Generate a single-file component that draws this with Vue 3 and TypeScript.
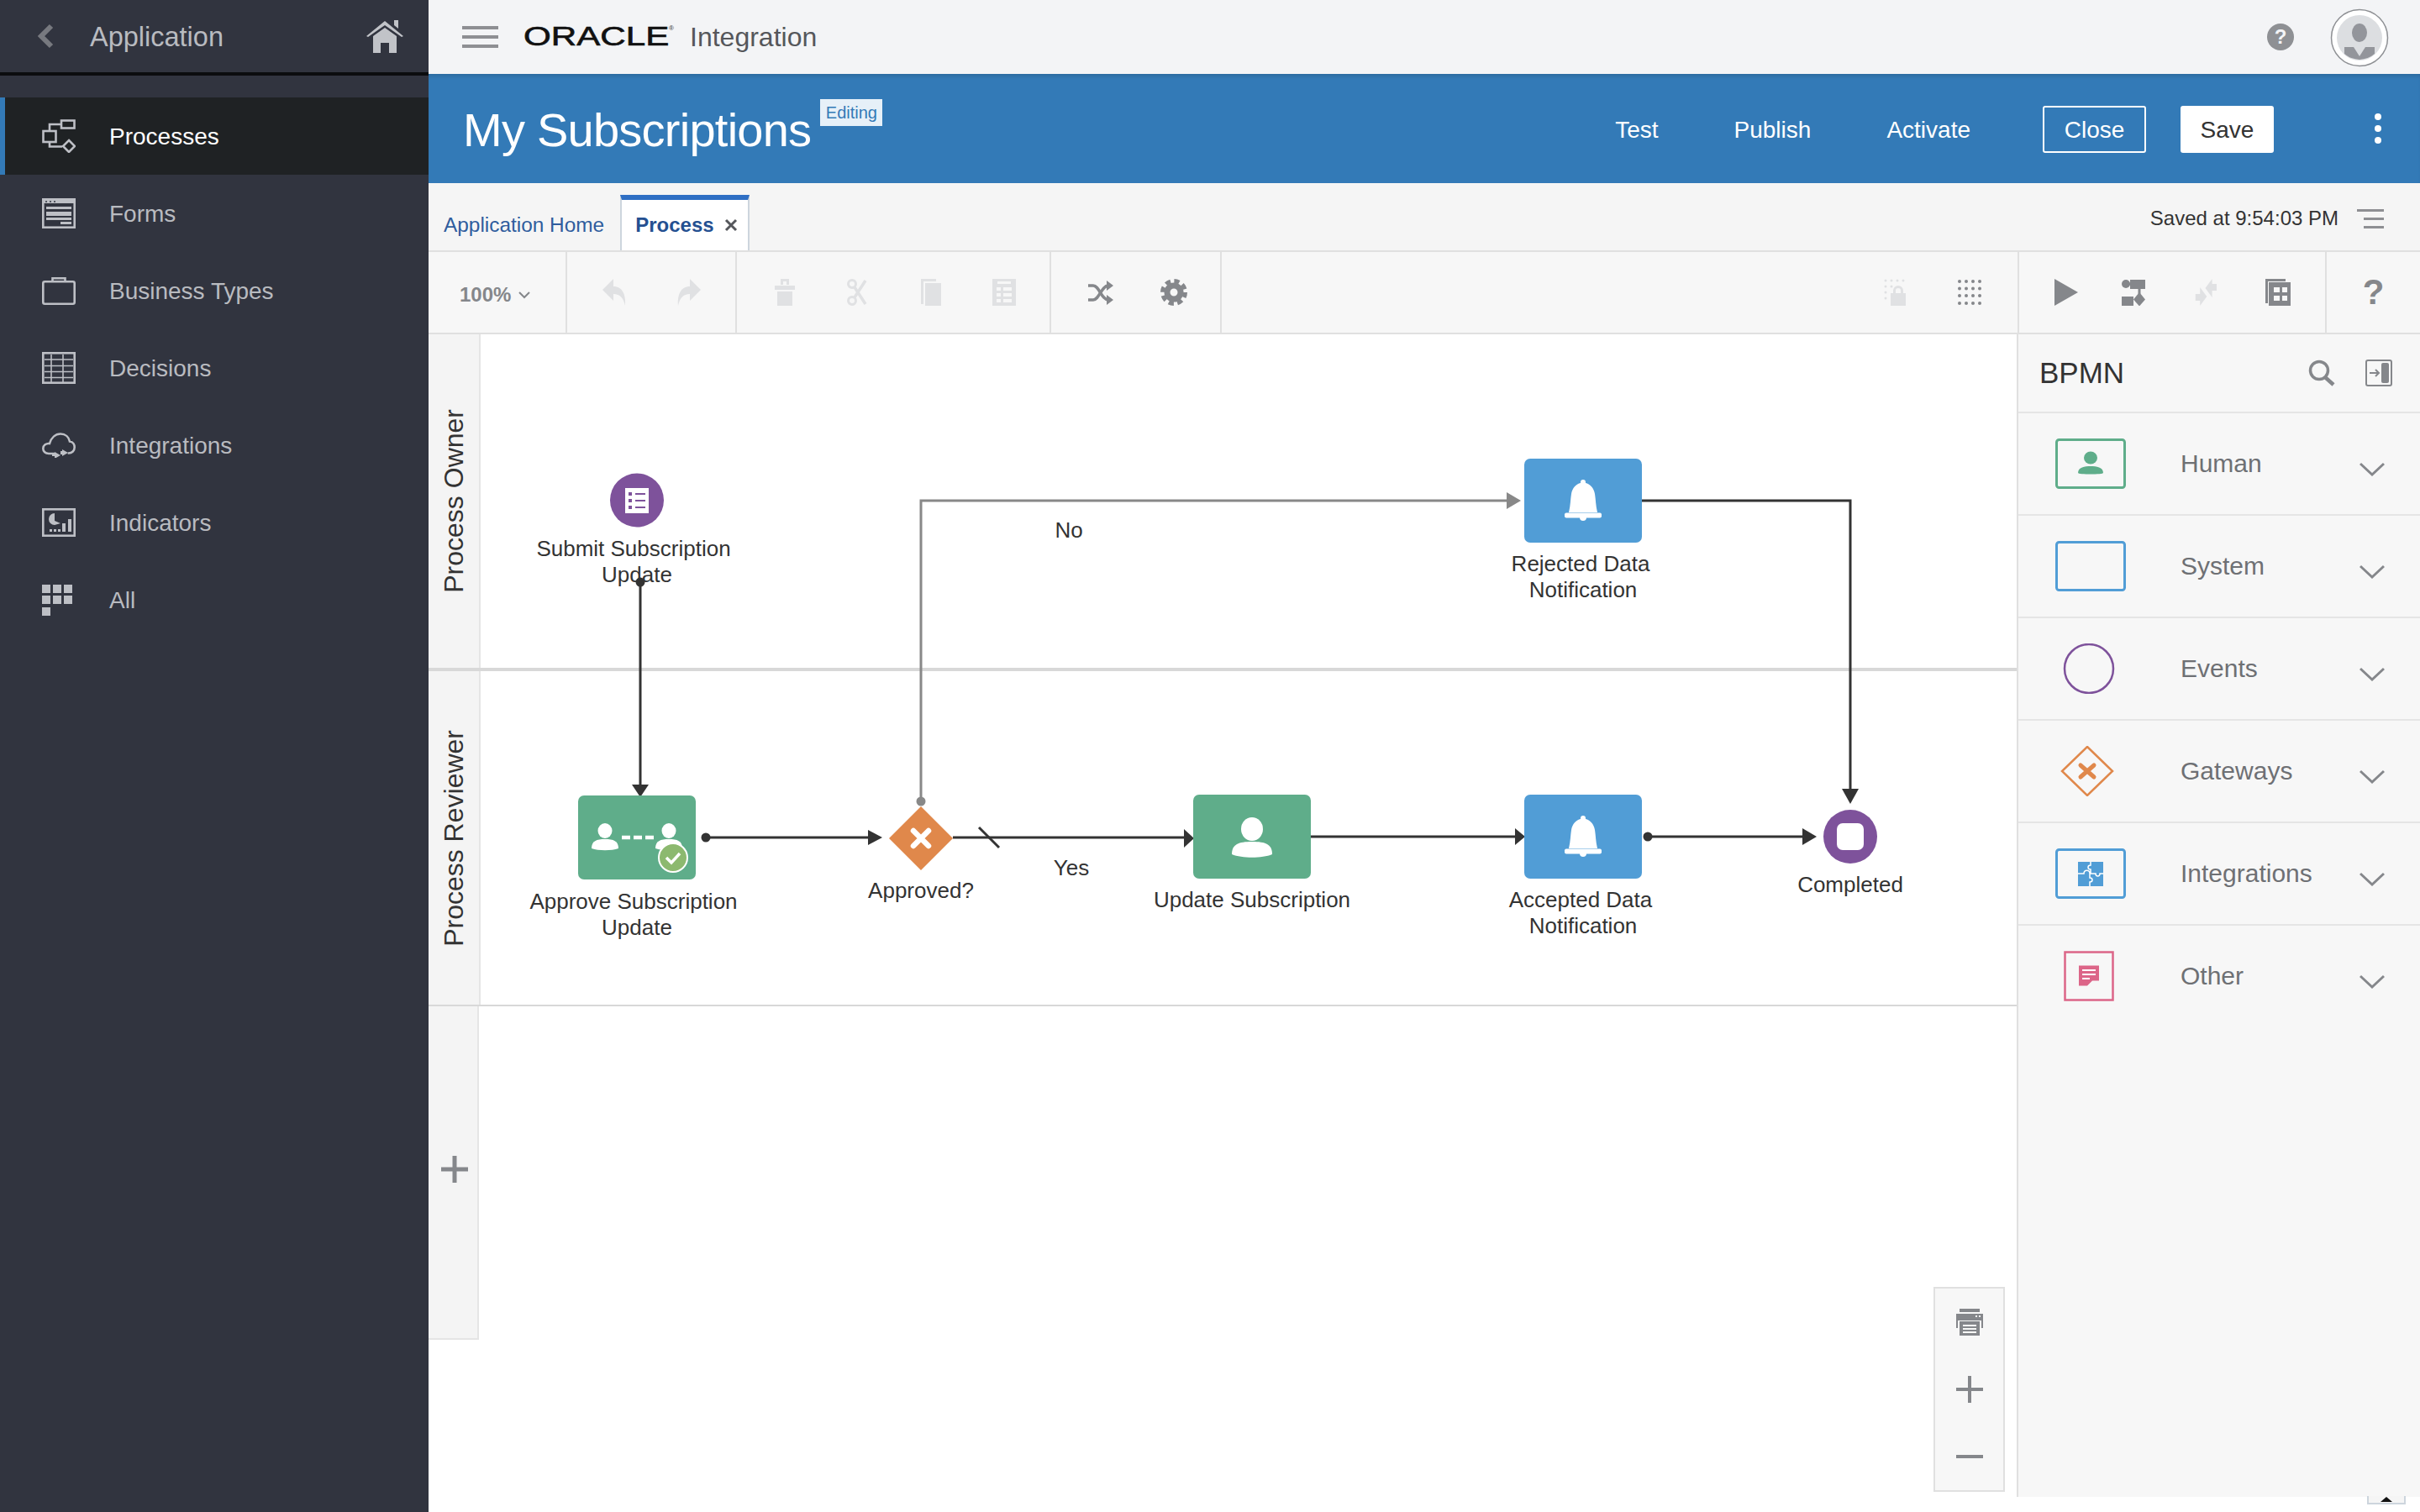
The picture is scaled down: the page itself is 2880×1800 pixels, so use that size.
<script setup lang="ts">
// icon bodies, all drawn with currentColor
const icons: Record<string, string> = {
  processes: '<g fill="none" stroke="currentColor" stroke-width="2.6"><rect x="23" y="1.5" width="15.5" height="9"/><rect x="1.5" y="14" width="15" height="13"/><path d="M9 14V6h14M9 27v5.500h15"/><path d="M32 25l7 7-7 7-7-7z"/></g>',
  forms: '<g fill="none" stroke="currentColor" stroke-width="2.6"><rect x="1.300" y="1.300" width="37.400" height="33.400"/></g><g fill="currentColor"><rect x="2" y="2" width="36" height="4"/><rect x="5" y="10" width="30" height="3"/><rect x="5" y="16" width="30" height="5"/><rect x="5" y="23" width="30" height="3"/><rect x="22" y="28" width="13" height="3"/></g><g fill="#31343f"><circle cx="5" cy="4" r="1"/><circle cx="10" cy="4" r="1"/><circle cx="15" cy="4" r="1"/></g>',
  business: '<g fill="none" stroke="currentColor" stroke-width="2.6"><rect x="1.300" y="5.300" width="37.400" height="26.400" rx="2"/><path d="M12.500 5V1.300h15V5"/></g>',
  decisions: '<g fill="none" stroke="currentColor" stroke-width="2.6"><rect x="1.300" y="1.300" width="37.400" height="35.400"/></g><g fill="none" stroke="currentColor" stroke-width="1.600"><path d="M3 9h34M3 16.500h34M3 23.500h34M3 30.500h34M11 3v33M25 3v33"/></g>',
  integrations: '<g fill="none" stroke="currentColor" stroke-width="2.600"><path d="M15 25H8C4 25 1.300 22.500 1.300 19 1.300 15 5 12.500 9 13 11 6 16 1.500 22 1.500c6 0 10 4 11 9 4 .5 5.700 4 5.700 7 0 4-3 7-7 7h-1"/></g><g fill="currentColor"><path d="M22 28l-7-4v3h-3v2h3v3zM24 21l7 4-7 4v-2h-2v-4h2z" transform="translate(0 -1)"/></g>',
  indicators: '<g fill="none" stroke="currentColor" stroke-width="2.600"><rect x="1.300" y="1.300" width="37.400" height="31.400"/></g><g fill="currentColor"><path d="M15 6a7 7 0 1 0 0 14h0l7-2-7-3z"/><rect x="9" y="25" width="3" height="3"/><rect x="14" y="25" width="3" height="3"/><rect x="19" y="25" width="3" height="3"/><rect x="24" y="18" width="4" height="10"/><rect x="31" y="13" width="4" height="15"/></g>',
  all: '<g fill="currentColor"><rect x="0" y="0" width="10" height="10"/><rect x="13" y="0" width="10" height="10"/><rect x="26" y="0" width="10" height="10"/><rect x="0" y="13" width="10" height="10"/><rect x="13" y="13" width="10" height="10"/><rect x="26" y="13" width="10" height="10"/><rect x="0" y="27" width="10" height="10"/></g>',

  undo: '<path fill="currentColor" d="M1 13 14 0v9c11 0 15 10 14 23-2-9-6-14-14-14v8z"/>',
  redo: '<path fill="currentColor" d="M31 13 18 0v9C7 9 3 19 4 32c2-9 6-14 14-14v8z"/>',
  trash: '<path fill="currentColor" fill-rule="evenodd" d="M11 0h10v7h-3V3h-4v4h-3zM4 8h24v5H4zM7 15h18v17H7z"/>',
  scissors: '<g fill="none" stroke="currentColor" stroke-width="3"><circle cx="9" cy="6" r="4.500"/><circle cx="9" cy="26" r="4.500"/><path d="M12 10l13 20M12 22L25 2" stroke-width="3.500"/></g>',
  copy: '<path fill="currentColor" d="M4 0h18v3H7v27H4z"/><path fill="currentColor" d="M9 5h19v27H9z"/>',
  form: '<path fill="currentColor" fill-rule="evenodd" d="M2 0h28v32H2zM8 3v3h16V3zM7 10v4h5v-4zM15 10v4h10v-4zM7 17v4h5v-4zM15 17v4h10v-4zM7 24v4h5v-4zM15 24v4h10v-4z"/>',
  shuffle: '<g fill="none" stroke="currentColor" stroke-width="3.500"><path d="M1 8h6c7 0 10 17 18 17"/><path d="M1 25h6c7 0 10-17 18-17"/></g><path fill="currentColor" d="M23 2l8 6-8 6zM23 19l8 6-8 6z"/>',
  gear: '<g fill="none" stroke="currentColor"><circle cx="16" cy="16" r="13.500" stroke-width="5" stroke-dasharray="6.200 4.400"/><circle cx="16" cy="16" r="8" stroke-width="7"/></g>',
  lock: '<g fill="currentColor"><circle cx="3" cy="2" r="1.500"/><circle cx="10" cy="2" r="1.500"/><circle cx="17" cy="2" r="1.500"/><circle cx="24" cy="2" r="1.500"/><circle cx="3" cy="9" r="1.500"/><circle cx="3" cy="16" r="1.500"/><circle cx="3" cy="23" r="1.500"/><circle cx="10" cy="9" r="1.500"/><path fill-rule="evenodd" d="M9 17h3v-3a6 6 0 0 1 12 0v3h3v15H9zM15 17h6v-3a3 3 0 0 0-6 0z"/></g>',
  grid: '<g fill="currentColor"><circle cx="4" cy="3" r="2"/><circle cx="12" cy="3" r="2"/><circle cx="20" cy="3" r="2"/><circle cx="28" cy="3" r="2"/><circle cx="4" cy="11.500" r="2"/><circle cx="12" cy="11.500" r="2"/><circle cx="20" cy="11.500" r="2"/><circle cx="28" cy="11.500" r="2"/><circle cx="4" cy="20" r="2"/><circle cx="12" cy="20" r="2"/><circle cx="20" cy="20" r="2"/><circle cx="28" cy="20" r="2"/><circle cx="4" cy="29" r="2"/><circle cx="12" cy="29" r="2"/><circle cx="20" cy="29" r="2"/><circle cx="28" cy="29" r="2"/></g>',
  play: '<path fill="currentColor" d="M2 0l28 16L2 32z"/>',
  flow: '<g fill="currentColor"><rect x="12" y="1" width="18" height="11"/><circle cx="7" cy="6" r="5"/><rect x="2" y="21" width="14" height="11"/><path d="M23 16l7 8.500-7 8-7-8z"/></g><g fill="none" stroke="currentColor" stroke-width="3"><path d="M7 6h8M23 10v8"/></g>',
  merge: '<path fill="currentColor" d="M30 6h-6V0l-9 11 9 11v-8h6zM2 26h6v6l9-11-9-11v8H2z" transform="translate(2 0) scale(.9 1)"/>',
  table: '<path fill="currentColor" d="M1 0h24v3H4v26H1z"/><path fill="currentColor" fill-rule="evenodd" d="M5 4h26v28H5zM11 10h7v6h-7zM21 10h6v6h-6zM11 20h7v6h-7zM21 20h6v6h-6z"/>',

  human: '<rect x="1.500" y="1.500" width="81" height="57" rx="3" fill="none" stroke="#5fad8a" stroke-width="3"/><g fill="#5fad8a"><ellipse cx="42" cy="23" rx="8" ry="7.500"/><path d="M27 41c0-7 8-8 15-8s15 1 15 8c0 2-30 2-30 0z"/></g>',
  system: '<rect x="1.500" y="1.500" width="81" height="57" rx="3" fill="none" stroke="#519dd6" stroke-width="3"/>',
  events: '<circle cx="40" cy="30" r="29" fill="none" stroke="#7e529b" stroke-width="2.500"/>',
  gateways: '<path d="M38 1l30 29-30 29L8 30z" fill="none" stroke="#e0884b" stroke-width="2.500"/><path d="M30 23l16 14M46 23L30 37" stroke="#e0884b" stroke-width="5" stroke-linecap="round"/>',
  puzzle: '<rect x="1.500" y="1.500" width="81" height="57" rx="3" fill="none" stroke="#519dd6" stroke-width="3"/><rect x="27" y="16" width="30" height="29" fill="#519dd6"/><path d="M27 30h7c0-5 7-5 7 0h7c0 4 5 4 5 0h4M42 16v4c-4 0-4 5 0 5v5M41 30v5c4 0 4 5 0 5v5" fill="none" stroke="#fff" stroke-width="1.500"/>',
  note: '<rect x="1.500" y="1.500" width="57" height="57" fill="none" stroke="#dc6588" stroke-width="2.500"/><path d="M18 18h24v18h-8l-6 6H18z" transform="translate(0 -.5)" fill="#dc6588"/><path d="M22 23h16M22 28h16M22 33h9" stroke="#fff" stroke-width="2"/>',
}

const navItems = [
  { label: 'Processes', icon: 'processes', w: 40, h: 40, active: true },
  { label: 'Forms', icon: 'forms', w: 40, h: 36 },
  { label: 'Business Types', icon: 'business', w: 40, h: 33 },
  { label: 'Decisions', icon: 'decisions', w: 40, h: 38 },
  { label: 'Integrations', icon: 'integrations', w: 40, h: 30 },
  { label: 'Indicators', icon: 'indicators', w: 40, h: 34 },
  { label: 'All', icon: 'all', w: 36, h: 37 },
]

const toolGroups = [
  { cls: 'g-undo', items: [{ icon: 'undo', off: true }, { icon: 'redo', off: true }] },
  { cls: 'g-edit', items: [{ icon: 'trash', off: true }, { icon: 'scissors', off: true }, { icon: 'copy', off: true }, { icon: 'form', off: true }] },
  { cls: 'g-flow', items: [{ icon: 'shuffle', off: false }, { icon: 'gear', off: false }] },
]

const palette = [
  { label: 'Human', icon: 'human', w: 84 },
  { label: 'System', icon: 'system', w: 84 },
  { label: 'Events', icon: 'events', w: 84 },
  { label: 'Gateways', icon: 'gateways', w: 84 },
  { label: 'Integrations', icon: 'puzzle', w: 84 },
  { label: 'Other', icon: 'note', w: 60 },
]

// diagram, in page coordinates (the svg viewBox starts at the canvas origin)
const dark = '#333'
const grey = '#888'
const edges = [
  { d: 'M762 693V936', color: dark },
  { d: 'M840 997H1034', color: dark },
  { d: 'M1096 954V596H1794', color: grey },
  { d: 'M1134 997H1410', color: dark },
  { d: 'M1560 996H1804', color: dark },
  { d: 'M1954 596H2202V941', color: dark },
  { d: 'M1961 996H2146', color: dark },
]
const heads = [
  { p: '752,934 772,934 762,949', color: dark },
  { p: '1033,988 1050,997 1033,1006', color: dark },
  { p: '1793,586 1810,596 1793,606', color: grey },
  { p: '1409,987 1421,998 1409,1009', color: dark },
  { p: '1803,986 1815,996 1803,1006', color: dark },
  { p: '2192,939 2212,939 2202,957', color: dark },
  { p: '2145,986 2162,996 2145,1006', color: dark },
]
const dots = [
  { x: 762, y: 693, color: dark },
  { x: 840, y: 997, color: dark },
  { x: 1096, y: 954, color: grey },
  { x: 1961, y: 996, color: dark },
]
const labels = [
  { x: 754, y: 653, text: 'Submit Subscription' },
  { x: 758, y: 684, text: 'Update' },
  { x: 754, y: 1073, text: 'Approve Subscription' },
  { x: 758, y: 1104, text: 'Update' },
  { x: 1096, y: 1060, text: 'Approved?' },
  { x: 1272, y: 631, text: 'No' },
  { x: 1275, y: 1033, text: 'Yes' },
  { x: 1490, y: 1071, text: 'Update Subscription' },
  { x: 1881, y: 671, text: 'Rejected Data' },
  { x: 1884, y: 702, text: 'Notification' },
  { x: 1881, y: 1071, text: 'Accepted Data' },
  { x: 1884, y: 1102, text: 'Notification' },
  { x: 2202, y: 1053, text: 'Completed' },
]
const bellTasks = [{ x: 1814, y: 546 }, { x: 1814, y: 946 }]
const laneNames = ['Process Owner', 'Process Reviewer']
</script>

<template>
  <div class="page">
    <aside class="sidebar">
      <div class="side-head">
        <svg class="back" width="20" height="30" viewBox="0 0 20 30"><path d="M17 3 5 15l12 12" fill="none" stroke="currentColor" stroke-width="6"/></svg>
        <span class="side-title">Application</span>
        <svg class="home" width="44" height="40" viewBox="0 0 44 40">
          <path d="M0 20 22 2l22 18-2 1L22 7 2 21z" fill="currentColor" />
          <path d="M33 1h5v10l-5-4z" fill="currentColor" />
          <path fill-rule="evenodd" d="M8 20 22 10l14 10v20H27V28h-10v12H8z" fill="currentColor" />
        </svg>
      </div>
      <nav class="side-nav">
        <a v-for="item in navItems" :key="item.label" class="nav-item" :class="{ active: item.active }">
          <span class="nav-icon">
            <svg :width="item.w" :height="item.h" :viewBox="`0 0 ${item.w} ${item.h}`" v-html="icons[item.icon]"></svg>
          </span>
          <span class="nav-label">{{ item.label }}</span>
        </a>
      </nav>
    </aside>

    <main class="main">
      <header class="topbar">
        <span class="burger"><i></i><i></i><i></i></span>
        <span class="logo"><span class="logo-word">ORACLE</span><sup class="logo-reg">®</sup></span>
        <span class="product">Integration</span>
        <span class="grow"></span>
        <span class="help-dot">?</span>
        <svg class="avatar" width="70" height="70" viewBox="0 0 70 70">
          <circle cx="35" cy="35" r="33.500" fill="#fff" stroke="#8e9094" stroke-width="1.500" />
          <circle cx="35" cy="35" r="27" fill="#dcdee1" />
          <ellipse cx="35" cy="29" rx="9" ry="11" fill="#93959b" />
          <path d="M17 46h36v8a27 27 0 0 1-36 0z" fill="#93959b" />
          <path d="M28 46h14l-7 11z" fill="#dcdee1" />
        </svg>
      </header>

      <section class="banner">
        <h1 class="app-name">My Subscriptions</h1>
        <span class="badge">Editing</span>
        <span class="grow"></span>
        <a class="bar-link">Test</a>
        <a class="bar-link l-publish">Publish</a>
        <a class="bar-link l-activate">Activate</a>
        <button class="btn btn-close">Close</button>
        <button class="btn btn-save">Save</button>
        <span class="kebab"><i></i><i></i><i></i></span>
      </section>

      <div class="tabs">
        <a class="tab-link">Application Home</a>
        <div class="tab-active">
          <span>Process</span>
          <svg width="16" height="16" viewBox="0 0 16 16"><path d="M2 2l12 12M14 2 2 14" stroke="#55575b" stroke-width="3" /></svg>
        </div>
        <span class="grow"></span>
        <span class="saved">Saved at 9:54:03 PM</span>
        <span class="saved-menu"><i></i><i></i><i></i></span>
      </div>

      <div class="toolbar">
        <div class="zoom-pick">
          <span>100%</span>
          <svg width="14" height="10" viewBox="0 0 14 10"><path d="M1 2l6 6 6-6" fill="none" stroke="currentColor" stroke-width="2" /></svg>
        </div>
        <div v-for="group in toolGroups" :key="group.cls" class="tool-group" :class="group.cls">
          <span v-for="t in group.items" :key="t.icon" class="tool" :class="{ off: t.off }">
            <svg width="32" height="32" viewBox="0 0 32 32" v-html="icons[t.icon]"></svg>
          </span>
        </div>
        <span class="grow"></span>
        <span class="tool off"><svg width="32" height="32" viewBox="0 0 32 32" v-html="icons.lock"></svg></span>
        <span class="tool t-grid"><svg width="32" height="32" viewBox="0 0 32 32" v-html="icons.grid"></svg></span>
        <div class="run-group">
          <span class="tool t-play"><svg width="32" height="32" viewBox="0 0 32 32" v-html="icons.play"></svg></span>
          <span class="tool"><svg width="32" height="32" viewBox="0 0 32 32" v-html="icons.flow"></svg></span>
          <span class="tool off"><svg width="32" height="32" viewBox="0 0 32 32" v-html="icons.merge"></svg></span>
          <span class="tool"><svg width="32" height="32" viewBox="0 0 32 32" v-html="icons.table"></svg></span>
        </div>
        <div class="query-group">?</div>
      </div>

      <div class="work">
        <div class="canvas">
          <div v-for="name in laneNames" :key="name" class="lane">
            <div class="lane-head"><span class="lane-name">{{ name }}</span></div>
          </div>
          <div class="lane-add">
            <svg width="34" height="34" viewBox="0 0 34 34"><path d="M17 1v32M1 17h32" stroke="#85878b" stroke-width="5" /></svg>
          </div>

          <svg class="diagram" viewBox="510 398 1892 1402" width="1892" height="1402">
            <path v-for="e in edges" :key="e.d" :d="e.d" fill="none" :stroke="e.color" stroke-width="3" />
            <polygon v-for="h in heads" :key="h.p" :points="h.p" :fill="h.color" />
            <circle v-for="d in dots" :key="d.x" :cx="d.x" :cy="d.y" r="5.500" :fill="d.color" />
            <path d="M1165 985l24 24" stroke="#333" stroke-width="3" />

            <!-- start event -->
            <circle cx="758" cy="595.500" r="32" fill="#7e529b" />
            <rect x="744" y="581" width="28" height="30" fill="#fff" />
            <path d="M748 586h4v4h-4zM748 594h4v4h-4zM748 602h4v4h-4z" fill="#7e529b" />
            <path d="M756 588h12M756 596h12M756 604h12" stroke="#7e529b" stroke-width="2" />

            <!-- approve task -->
            <rect x="688" y="947" width="140" height="100" rx="7" fill="#5fad8a" />
            <g fill="#fff">
              <ellipse cx="720" cy="989" rx="8.500" ry="9" />
              <path d="M704 1010c0-9 6-11 16-11s16 2 16 11c-8 3-24 3-32 0z" />
              <ellipse cx="796" cy="989" rx="8.500" ry="9" />
              <path d="M780 1010c0-9 6-11 16-11s16 2 16 11c-8 3-24 3-32 0z" />
            </g>
            <path d="M740 997h38" stroke="#fff" stroke-width="4.500" stroke-dasharray="10 4" />
            <circle cx="801" cy="1021" r="17" fill="#8cb96f" stroke="#fff" stroke-width="2" />
            <path d="M793 1021l6 6 10-11" fill="none" stroke="#fff" stroke-width="3.500" />

            <!-- gateway -->
            <path d="M1096 960l38 38-38 38-38-38z" fill="#e0884b" />
            <path d="M1087 989l18 18M1105 989l-18 18" stroke="#fff" stroke-width="6.500" stroke-linecap="round" />

            <!-- update task -->
            <rect x="1420" y="946" width="140" height="100" rx="7" fill="#5fad8a" />
            <ellipse cx="1490" cy="987" rx="13" ry="14" fill="#fff" />
            <path d="M1466 1017c0-12 8-15 24-15s24 3 24 15c-12 5-36 5-48 0z" fill="#fff" />

            <!-- notification tasks -->
            <g v-for="t in bellTasks" :key="t.y" :transform="`translate(${t.x} ${t.y})`">
              <rect width="140" height="100" rx="7" fill="#519dd6" />
              <g transform="translate(70 50)" fill="#fff">
                <path d="M-17 14C-15 6-15-2-14-8-13-15-8-20-3-21V-22A3 3 0 0 1 3-22V-21C8-20 13-15 14-8 15-2 15 6 17 14Z" />
                <rect x="-22" y="14.500" width="44" height="6" rx="2" />
                <circle cy="20" r="4" />
              </g>
            </g>

            <!-- end event -->
            <circle cx="2202" cy="996" r="32" fill="#7e529b" />
            <rect x="2186" y="980" width="32" height="32" rx="7" fill="#fff" />

            <text v-for="l in labels" :key="l.text + l.y" class="node-label" :x="l.x" :y="l.y" text-anchor="middle" dominant-baseline="central">{{ l.text }}</text>
          </svg>

          <div class="zoom-box">
            <svg width="32" height="32" viewBox="0 0 32 32">
              <path fill="#85878b" d="M4 0h24v4H4zM0 6h32v17h-2v-9H2v9H0zM4 15h24v17H4z" />
              <path d="M8 20h16M8 24h16M8 28h16" stroke="#f7f7f7" stroke-width="2" />
              <path d="M23 9h2M27 9h2" stroke="#f7f7f7" stroke-width="2" />
            </svg>
            <svg width="32" height="32" viewBox="0 0 32 32"><path d="M16 0v32M0 16h32" stroke="#85878b" stroke-width="4" /></svg>
            <svg width="32" height="32" viewBox="0 0 32 32"><path d="M0 16h32" stroke="#85878b" stroke-width="4" /></svg>
          </div>
        </div>

        <aside class="panel">
          <div class="panel-head">
            <span class="panel-title">BPMN</span>
            <span class="grow"></span>
            <svg class="p-search" width="32" height="32" viewBox="0 0 32 32">
              <circle cx="13" cy="13" r="10.500" fill="none" stroke="#85878b" stroke-width="3.500" />
              <path d="M20 21l10 9" stroke="#85878b" stroke-width="4.500" />
            </svg>
            <svg width="32" height="32" viewBox="0 0 32 32">
              <rect x="1" y="1" width="30" height="30" rx="2" fill="none" stroke="#85878b" stroke-width="2" />
              <rect x="19" y="4" width="9" height="24" rx="2" fill="#85878b" />
              <path d="M5 16h11M12 12l4 4-4 4" fill="none" stroke="#85878b" stroke-width="2" />
            </svg>
          </div>
          <div v-for="row in palette" :key="row.label" class="p-row">
            <span class="p-icon">
              <svg :width="row.w" height="60" :viewBox="`0 0 ${row.w} 60`" v-html="icons[row.icon]"></svg>
            </span>
            <span class="p-label">{{ row.label }}</span>
            <span class="grow"></span>
            <svg class="p-chev" width="30" height="18" viewBox="0 0 30 18"><path d="M1 2l14 13L29 2" fill="none" stroke="#85878b" stroke-width="3" /></svg>
          </div>
        </aside>
      </div>
      <div class="scroll-tab"><svg width="14" height="6" viewBox="0 0 14 6"><path d="M7 0l7 6H0z" fill="#111" /></svg></div>
    </main>
  </div>
</template>

<style scoped>
.page {
  display: flex;
  width: 2880px;
  height: 1800px;
  overflow: hidden;
  background: #fff;
  font-family: "Liberation Sans", Arial, sans-serif;
  color: #333;
}
.grow { flex: 1; }

/* left navigation */
.sidebar {
  width: 510px;
  flex: none;
  background: #31343f;
  color: #b9bbc0;
}
.side-head {
  display: flex;
  align-items: center;
  height: 86px;
  padding: 0 30px 0 44px;
  border-bottom: 4px solid #0b0c0e;
  box-sizing: content-box;
}
.back { color: #77797f; margin-right: 43px; }
.side-title { font-size: 32.500px; padding-top: 3px; }
.home { margin-left: auto; color: #c1c3c8; }
.side-nav { padding-top: 26px; }
.nav-item {
  display: flex;
  align-items: center;
  height: 92px;
  padding-left: 50px;
  font-size: 28px;
}
.nav-icon {
  width: 80px;
  display: flex;
  color: #bdbfc5;
}
.nav-label { padding-top: 1px; }
.nav-item.active {
  background: #1f2224;
  color: #fff;
  box-shadow: inset 6px 0 0 #337ab7;
}

/* top bars */
.main { flex: 1; display: flex; flex-direction: column; position: relative; min-width: 0; }
.topbar {
  display: flex;
  align-items: center;
  height: 88px;
  flex: none;
  padding: 0 37px 0 40px;
  background: #f3f4f6;
}
.burger { display: flex; flex-direction: column; gap: 7px; width: 43px; }
.burger i { height: 4px; background: #8e8f93; }
.logo { width: 180px; margin-left: 30px; display: flex; height: 30px; align-items: center; position: relative; }
.logo-word {
  font-size: 31px;
  font-weight: 400;
  color: #111;
  -webkit-text-stroke: 0.6px #111;
  transform: scaleX(1.36);
  transform-origin: left center;
}
.logo-reg { position: absolute; left: 173px; top: 0; font-size: 8px; color: #333; line-height: 10px; }
.product { font-size: 32px; color: #55575b; margin-left: 18px; }
.help-dot {
  width: 32px;
  height: 32px;
  border-radius: 50%;
  background: #8e9094;
  color: #f3f4f6;
  font-size: 24px;
  font-weight: 700;
  line-height: 32px;
  text-align: center;
  margin-right: 43px;
}
.avatar { margin-top: 2px; }
.banner {
  display: flex;
  align-items: center;
  height: 130px;
  flex: none;
  padding: 0 46px 0 41px;
  background: #337ab7;
  box-shadow: inset 0 5px 4px -2px rgba(0, 0, 0, 0.12);
  color: #fff;
}
.app-name { margin: 4px 0 0; font-size: 56px; font-weight: 400; line-height: 60px; letter-spacing: -0.75px; }
.badge {
  align-self: flex-start;
  margin: 30px 0 0 11px;
  width: 74px;
  height: 32px;
  line-height: 32px;
  text-align: center;
  background: #e6f0f8;
  color: #337ab7;
  font-size: 20px;
}
.bar-link { font-size: 28px; padding-top: 4px; position: relative; left: -1px; }
.l-publish { margin-left: 90px; }
.l-activate { margin-left: 90px; }
.btn {
  height: 56px;
  margin-top: 2px;
  border-radius: 3px;
  font-family: inherit;
  font-size: 28px;
  padding: 2px 0 0;
}
.btn-close { width: 123px; margin-left: 85px; background: transparent; border: 2px solid #fff; color: #fff; }
.btn-save { width: 111px; margin-left: 41px; background: #fff; border: 0; color: #333; }
.kebab { display: flex; flex-direction: column; gap: 6px; margin-left: 120px; }
.kebab i { width: 8px; height: 8px; border-radius: 50%; background: #fff; }

/* tabs */
.tabs {
  display: flex;
  align-items: flex-end;
  height: 80px;
  flex: none;
  padding: 0 43px 0 18px;
  background: #f5f5f5;
  border-bottom: 2px solid #e0e0e0;
}
.tab-link { font-size: 24.400px; color: #2f5d9e; height: 66px; line-height: 72px; }
.tab-active {
  display: flex;
  align-items: center;
  gap: 12px;
  width: 154px;
  height: 66px;
  margin-left: 19px;
  padding: 0 0 0 16px;
  box-sizing: border-box;
  background: #fff;
  border-top: 6px solid #2f6fc4;
  border-left: 2px solid #cdd5dd;
  border-right: 2px solid #cdd5dd;
  font-size: 24px;
  font-weight: 700;
  color: #245091;
}
.saved { font-size: 24px; color: #333; align-self: center; margin: 4px 22px 0 0; }
.saved-menu { display: flex; flex-direction: column; align-items: flex-end; gap: 7px; width: 32px; align-self: center; margin-top: 4px; }
.saved-menu i { height: 3px; background: #8e8f93; width: 24px; }
.saved-menu i:first-child { width: 32px; }

/* toolbar */
.toolbar {
  display: flex;
  align-items: stretch;
  height: 98px;
  flex: none;
  background: #f7f7f7;
  border-bottom: 2px solid #e0e0e0;
  box-sizing: border-box;
}
.zoom-pick {
  display: flex;
  align-items: center;
  gap: 9px;
  width: 165px;
  box-sizing: border-box;
  padding: 6px 0 0 37px;
  font-size: 24px;
  font-weight: 700;
  color: #85878b;
  border-right: 2px solid #e0e0e0;
}
.tool-group { display: flex; padding-left: 13px; border-right: 2px solid #e0e0e0; box-sizing: border-box; }
.g-undo { width: 202px; }
.g-edit { width: 374px; }
.g-flow { width: 203px; padding-left: 15px; }
.tool {
  width: 87px;
  display: flex;
  align-items: center;
  justify-content: center;
  color: #85878b;
}
.tool.off { color: #e0e1e3; }
.t-grid { margin-right: 14px; }
.run-group {
  display: flex;
  flex: none;
  width: 368px;
  box-sizing: border-box;
  padding-left: 19px;
  border-left: 2px solid #e0e0e0;
  border-right: 2px solid #e0e0e0;
}
.run-group .tool { width: 86px; }
.run-group .t-play { width: 74px; }
.query-group {
  flex: none;
  width: 111px;
  display: flex;
  align-items: center;
  justify-content: center;
  color: #85878b;
  font-size: 42px;
  font-weight: 700;
}

/* canvas */
.work { flex: 1; display: flex; min-height: 0; }
.canvas { flex: 1; position: relative; background: #fff; min-width: 0; }
.lane {
  height: 397px;
  border-bottom: 4px solid #d8d8d8;
}
.lane + .lane { border-bottom: 2px solid #d8d8d8; height: 397px; }
.lane-head {
  width: 60px;
  height: 100%;
  background: #f4f4f4;
  border-right: 2px solid #e5e5e5;
  display: flex;
  align-items: center;
  justify-content: center;
}
.lane-name {
  writing-mode: vertical-rl;
  transform: rotate(180deg);
  font-size: 32px;
  color: #333;
  white-space: nowrap;
}
.lane-add {
  width: 60px;
  height: 397px;
  padding: 0 0 8px 4px;
  box-sizing: border-box;
  background: #f4f4f4;
  border-right: 2px solid #e5e5e5;
  border-bottom: 2px solid #e5e5e5;
  display: flex;
  align-items: center;
  justify-content: center;
}
.diagram { position: absolute; left: 0; top: 0; pointer-events: none; }
.node-label { font-size: 26px; fill: #333; }
.zoom-box {
  position: absolute;
  right: 14px;
  bottom: 24px;
  width: 85px;
  height: 244px;
  box-sizing: border-box;
  padding: 24px 0;
  background: #f7f7f7;
  border: 2px solid #e0e0e0;
  display: flex;
  flex-direction: column;
  align-items: center;
  justify-content: space-between;
}

/* palette */
.panel {
  width: 478px;
  flex: none;
  height: 1384px;
  background: #f7f7f7;
  border-left: 2px solid #e0e0e0;
}
.panel-head {
  display: flex;
  align-items: center;
  height: 92px;
  padding: 0 33px 0 25px;
  border-bottom: 2px solid #e5e5e5;
}
.panel-title { font-size: 35px; color: #333; }
.p-search { margin-right: 36px; }
.p-row {
  display: flex;
  align-items: center;
  height: 120px;
  padding: 0 42px 0 44px;
  border-bottom: 2px solid #e5e5e5;
}
.p-row:last-child { border-bottom: 0; }
.p-icon { width: 84px; display: flex; margin-right: 66px; }
.p-row:last-child .p-icon { padding-left: 10px; box-sizing: border-box; }
.p-label { font-size: 30px; color: #6e7074; position: relative; left: -1px; }
.p-chev { margin-top: 14px; }
.scroll-tab {
  position: absolute;
  right: 17px;
  bottom: 9px;
  width: 46px;
  height: 10px;
  box-sizing: border-box;
  padding-top: 1px;
  display: flex;
  justify-content: center;
  align-items: flex-start;
  border: 2px solid #cdd5dd;
  border-top: 0;
  background: #f5f5f5;
}
</style>
